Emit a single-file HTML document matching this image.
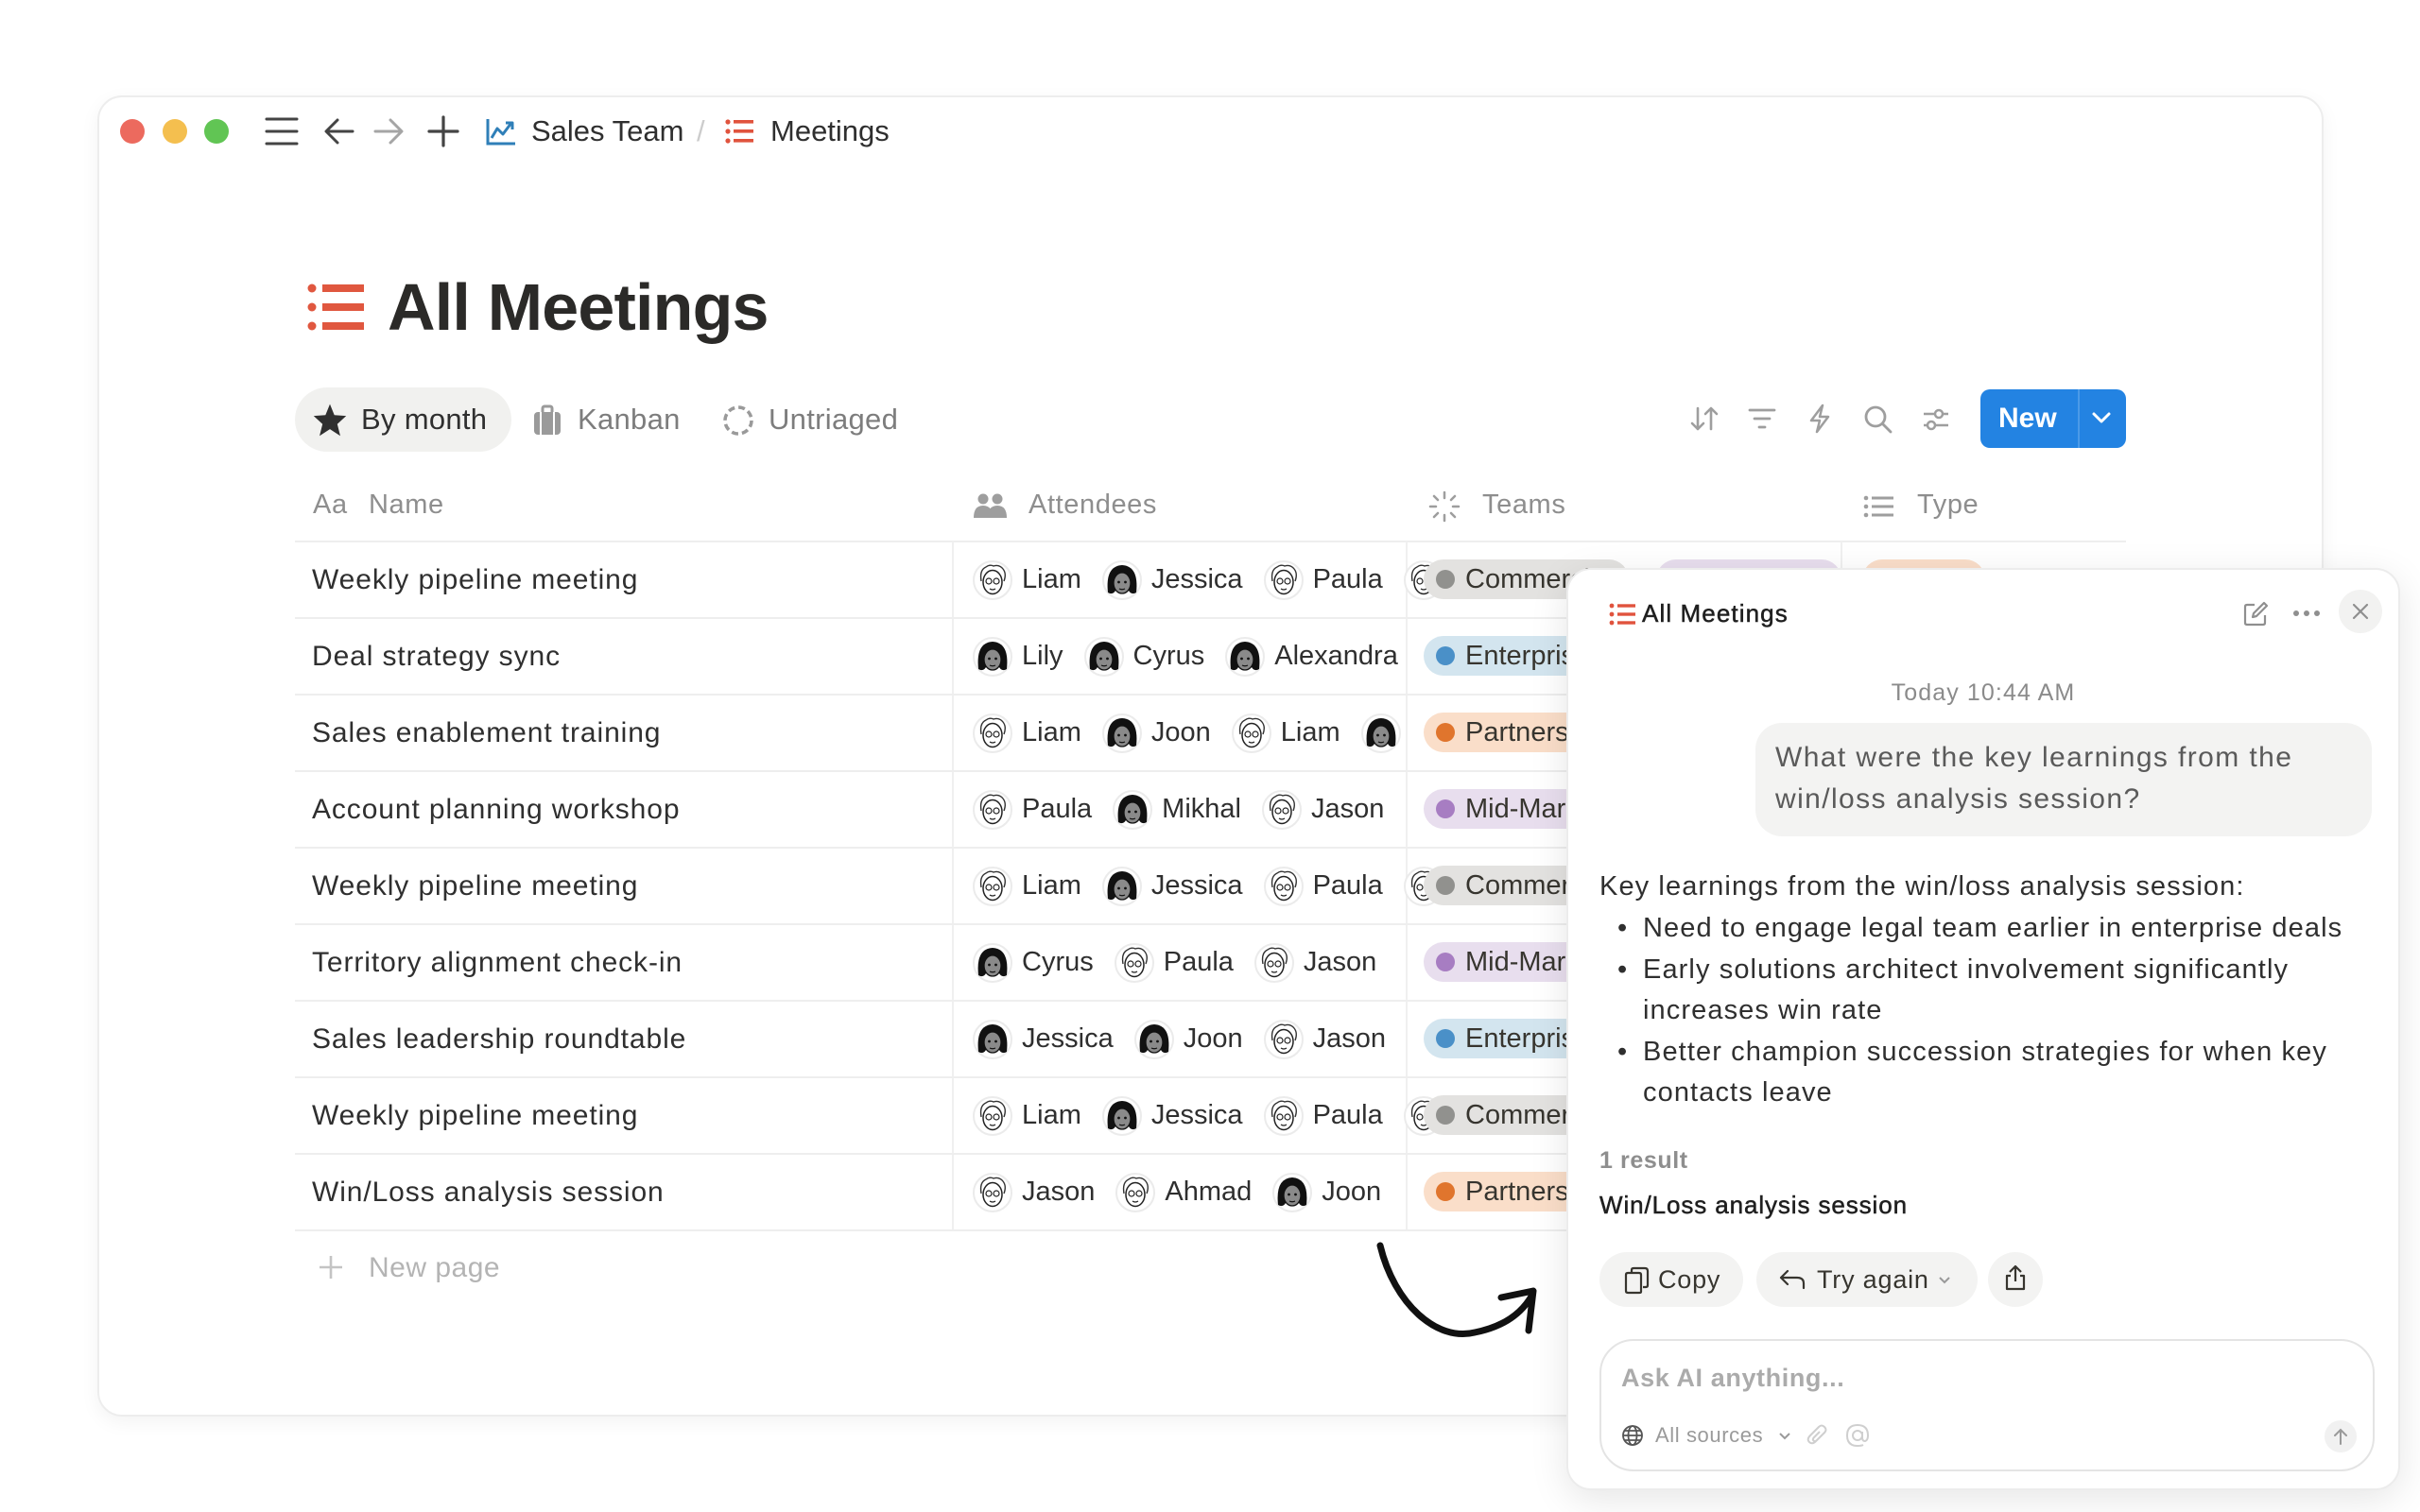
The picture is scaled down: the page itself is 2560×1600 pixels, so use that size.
<!DOCTYPE html>
<html><head><meta charset="utf-8">
<style>
*{box-sizing:border-box;margin:0;padding:0}
body{width:2560px;height:1600px;overflow:hidden;background:#fff;font-family:"Liberation Sans",sans-serif;color:#2f2f2f;position:relative}
.abs{position:absolute}
.win{position:absolute;left:103px;top:101px;width:2355px;height:1398px;border:2px solid #ededed;border-radius:26px;box-shadow:0 6px 20px rgba(0,0,0,.05);background:#fff}
.dot{position:absolute;top:126px;width:26px;height:26px;border-radius:50%}
.crumb{position:absolute;top:119px;font-size:31px;color:#2f2f2f;line-height:40px}
.tab{position:absolute;top:410px;height:68px;line-height:68px;font-size:31px;color:#7d7d7d;letter-spacing:0.3px}
.hdr{position:absolute;top:514px;font-size:29px;color:#8e8e8e;line-height:40px;letter-spacing:0.6px}
.hline{position:absolute;left:312px;width:1937px;height:2px;background:#eeeeee}
.vline{position:absolute;width:2px;background:#f0f0f0}
.row{position:absolute;left:312px;width:1937px;height:81px}
.nm{position:absolute;left:18px;top:0;line-height:81px;font-size:30px;color:#2f2f2f;letter-spacing:0.9px}
.att{position:absolute;left:717px;top:0;height:81px;width:768px;overflow:hidden;display:flex;align-items:center;white-space:nowrap}
.att span{font-size:29px;margin:0 22px 0 10px;color:#2f2f2f}
.av{width:42px;height:42px;flex:none}
.pill{position:absolute;top:19px;height:42px;border-radius:21px;font-size:29px;line-height:42px;padding-left:44px;white-space:nowrap;overflow:hidden;color:#37352f}
.pill i{position:absolute;left:13px;top:11px;width:20px;height:20px;border-radius:50%}
.panel{position:absolute;left:1657px;top:601px;width:882px;height:976px;background:#fff;border:2px solid #ececec;border-radius:26px;box-shadow:0 10px 40px rgba(0,0,0,.10);z-index:5}
.pt{position:absolute;font-size:29px;color:#2f2f2f;line-height:44px;white-space:nowrap;letter-spacing:1.1px}
.btn{position:absolute;top:722px;height:58px;border-radius:29px;background:#f3f3f2;font-size:27px;line-height:58px;color:#37352f;letter-spacing:0.8px}
</style></head><body>
<div class="win"></div>
<div class="dot" style="left:127px;background:#ec6a5e"></div>
<div class="dot" style="left:172px;background:#f4bf4f"></div>
<div class="dot" style="left:216px;background:#61c554"></div>
<svg class="abs" style="left:280px;top:122px" width="36" height="34" viewBox="0 0 36 34"><g stroke="#444" stroke-width="3" stroke-linecap="round"><path d="M2 4H34M2 17H34M2 30H34"/></g></svg>
<svg class="abs" style="left:342px;top:124px" width="34" height="30" viewBox="0 0 34 30"><path d="M31 15H4M15 3L3 15L15 27" fill="none" stroke="#444" stroke-width="3" stroke-linecap="round" stroke-linejoin="round"/></svg>
<svg class="abs" style="left:394px;top:124px" width="34" height="30" viewBox="0 0 34 30"><path d="M3 15H30M19 3L31 15L19 27" fill="none" stroke="#a5a5a5" stroke-width="3" stroke-linecap="round" stroke-linejoin="round"/></svg>
<svg class="abs" style="left:452px;top:122px" width="34" height="34" viewBox="0 0 34 34"><path d="M17 2V32M2 17H32" stroke="#444" stroke-width="3.2" stroke-linecap="round"/></svg>
<svg class="abs" style="left:514px;top:124px" width="32" height="30" viewBox="0 0 32 30"><path d="M2 2V28H31" fill="none" stroke="#2f7fb8" stroke-width="3"/><path d="M6 22L12 12L18 18L27 6M21 6H28V13" fill="none" stroke="#2f7fb8" stroke-width="3" stroke-linejoin="round"/></svg>
<div class="crumb" style="left:562px">Sales Team</div>
<div class="crumb" style="left:737px;color:#ccc">/</div>
<svg class="abs" style="left:767px;top:126px" width="30" height="26" viewBox="0 0 30 26"><g fill="#e0533d"><circle cx="3" cy="3" r="2.6"/><circle cx="3" cy="13" r="2.6"/><circle cx="3" cy="23" r="2.6"/><rect x="9" y="1" width="21" height="3.6"/><rect x="9" y="11" width="21" height="3.6"/><rect x="9" y="21" width="21" height="3.6"/></g></svg>
<div class="crumb" style="left:815px">Meetings</div>

<svg class="abs" style="left:325px;top:299px" width="60" height="52" viewBox="0 0 60 52"><g fill="#e0573f"><circle cx="5" cy="6" r="4.5"/><circle cx="5" cy="26" r="4.5"/><circle cx="5" cy="46" r="4.5"/><rect x="16" y="2" width="44" height="8"/><rect x="16" y="22" width="44" height="8"/><rect x="16" y="42" width="44" height="8"/></g></svg>
<div class="abs" style="left:410px;top:280px;font-size:70px;font-weight:bold;line-height:90px;color:#2b2a28;letter-spacing:-0.8px">All Meetings</div>

<div class="abs" style="left:312px;top:410px;width:229px;height:68px;border-radius:34px;background:#f1f1ef"></div>
<svg class="abs" style="left:330px;top:426px" width="38" height="36" viewBox="0 0 24 23"><path d="M12 1L15 8.5L23 9L17 14.5L19 22.5L12 18L5 22.5L7 14.5L1 9L9 8.5Z" fill="#2f2f2f"/></svg>
<div class="tab" style="left:382px;color:#2f2f2f">By month</div>
<svg class="abs" style="left:563px;top:428px" width="32" height="34" viewBox="0 0 32 34"><rect x="2" y="8" width="28" height="24" rx="4" fill="#9a9a9a"/><rect x="11" y="2" width="10" height="10" rx="2" fill="none" stroke="#9a9a9a" stroke-width="3"/><path d="M9 8V32M23 8V32" stroke="#fff" stroke-width="2"/></svg>
<div class="tab" style="left:611px">Kanban</div>
<svg class="abs" style="left:764px;top:428px" width="34" height="34" viewBox="0 0 34 34"><circle cx="17" cy="17" r="14" fill="none" stroke="#9a9a9a" stroke-width="3.5" stroke-dasharray="7 4"/></svg>
<div class="tab" style="left:813px">Untriaged</div>

<svg class="abs" style="left:1788px;top:428px" width="30" height="30" viewBox="0 0 30 30"><path d="M8 4V26M2 20L8 26L14 20M22 26V4M16 10L22 4L28 10" fill="none" stroke="#9e9e9e" stroke-width="2.6" stroke-linecap="round" stroke-linejoin="round"/></svg>
<svg class="abs" style="left:1849px;top:430px" width="30" height="26" viewBox="0 0 30 26"><path d="M2 4H28M7 13H23M12 22H18" stroke="#9e9e9e" stroke-width="2.8" stroke-linecap="round"/></svg>
<svg class="abs" style="left:1913px;top:427px" width="24" height="32" viewBox="0 0 24 32"><path d="M15 2L3 18H12L9 30L21 14H12Z" fill="none" stroke="#9e9e9e" stroke-width="2.5" stroke-linejoin="round"/></svg>
<svg class="abs" style="left:1971px;top:428px" width="32" height="32" viewBox="0 0 32 32"><circle cx="13" cy="13" r="10" fill="none" stroke="#9e9e9e" stroke-width="2.8"/><path d="M21 21L29 29" stroke="#9e9e9e" stroke-width="2.8" stroke-linecap="round"/></svg>
<svg class="abs" style="left:2033px;top:430px" width="30" height="28" viewBox="0 0 30 28"><g stroke="#9e9e9e" stroke-width="2.5" fill="#fff"><path d="M2 8H28M2 20H28"/><circle cx="18" cy="8" r="4"/><circle cx="10" cy="20" r="4"/></g></svg>
<div class="abs" style="left:2095px;top:412px;width:154px;height:62px;border-radius:10px;background:#2383e2"></div>
<div class="abs" style="left:2114px;top:412px;line-height:62px;font-size:30px;font-weight:bold;color:#fff">New</div>
<div class="abs" style="left:2198px;top:412px;width:2px;height:62px;background:#4a9ae8"></div>
<svg class="abs" style="left:2212px;top:434px" width="22" height="16" viewBox="0 0 22 16"><path d="M3 4L11 12L19 4" fill="none" stroke="#fff" stroke-width="3" stroke-linecap="round" stroke-linejoin="round"/></svg>

<div class="hdr" style="left:331px">Aa</div>
<div class="hdr" style="left:390px">Name</div>
<svg class="abs" style="left:1030px;top:522px" width="36" height="26" viewBox="0 0 36 26"><g fill="#9e9e9e"><circle cx="10" cy="6" r="5.5"/><circle cx="25" cy="6" r="5.5"/><path d="M0 26Q0 13 10 13Q20 13 20 26Z"/><path d="M15 26Q15 13 25 13Q35 13 35 26Z"/></g></svg>
<div class="hdr" style="left:1088px">Attendees</div>
<svg class="abs" style="left:1511px;top:519px" width="34" height="34" viewBox="0 0 34 34"><g stroke="#9e9e9e" stroke-width="2.5" stroke-linecap="round"><path d="M17 2V8M17 26V32M2 17H8M26 17H32M6 6L10 10M24 24L28 28M28 6L24 10M10 24L6 28"/></g></svg>
<div class="hdr" style="left:1568px">Teams</div>
<svg class="abs" style="left:1971px;top:524px" width="32" height="24" viewBox="0 0 32 24"><g fill="#9e9e9e"><circle cx="3" cy="3" r="2.3"/><circle cx="3" cy="12" r="2.3"/><circle cx="3" cy="21" r="2.3"/><rect x="9" y="1.5" width="23" height="3"/><rect x="9" y="10.5" width="23" height="3"/><rect x="9" y="19.5" width="23" height="3"/></g></svg>
<div class="hdr" style="left:2028px">Type</div>

<div class="hline" style="top:572px"></div>
<div class="vline" style="left:1007px;top:573px;height:729px"></div>
<div class="vline" style="left:1487px;top:573px;height:729px"></div>
<div class="vline" style="left:1947px;top:573px;height:729px"></div>

<svg width="0" height="0" style="position:absolute">
<defs>
<symbol id="L" viewBox="0 0 42 42"><circle cx="21" cy="21" r="20" fill="#fff" stroke="#ebebeb" stroke-width="2"/><path d="M9 22Q7 10 14 7Q18 4 22 6Q28 4 32 9Q36 14 33 22" fill="none" stroke="#333" stroke-width="1.4"/><ellipse cx="21" cy="23" rx="10" ry="12.5" fill="#fff" stroke="#222" stroke-width="1.5"/><circle cx="17" cy="22" r="3" fill="none" stroke="#222" stroke-width="1.2"/><circle cx="25" cy="22" r="3" fill="none" stroke="#222" stroke-width="1.2"/><path d="M18 30Q21 32 24 30" fill="none" stroke="#222" stroke-width="1.3"/></symbol>
<symbol id="D" viewBox="0 0 42 42"><circle cx="21" cy="21" r="20" fill="#fff" stroke="#ebebeb" stroke-width="2"/><path d="M6 34Q3 6 21 5Q39 6 36 34Q31 37 28 32L14 32Q11 37 6 34Z" fill="#111"/><ellipse cx="21" cy="24" rx="9" ry="11" fill="#8a8a8a" stroke="#111" stroke-width="1.3"/><circle cx="17.5" cy="23" r="1.4" fill="#111"/><circle cx="24.5" cy="23" r="1.4" fill="#111"/><path d="M18 30Q21 31.5 24 30" fill="none" stroke="#111" stroke-width="1.2"/></symbol>
</defs></svg>

<div class="row" style="top:573px"><div class="nm">Weekly pipeline meeting</div><div class="att"><svg class="av"><use href="#L" width="42" height="42"/></svg><span>Liam</span><svg class="av"><use href="#D" width="42" height="42"/></svg><span>Jessica</span><svg class="av"><use href="#L" width="42" height="42"/></svg><span>Paula</span><svg class="av"><use href="#L" width="42" height="42"/></svg></div><div class="pill" style="left:1194px;width:217px;background:#e3e2e0"><i style="background:#91918e"></i>Commercial</div><div class="pill" style="left:1440px;width:196px;background:#e8deee"><i style="background:#a77dc2"></i>Mid-Market</div><div class="pill" style="left:1658px;width:130px;background:#fadec9"><i style="background:#e0752d"></i>Call</div></div>
<div class="hline" style="top:653px"></div>
<div class="row" style="top:654px"><div class="nm">Deal strategy sync</div><div class="att"><svg class="av"><use href="#D" width="42" height="42"/></svg><span>Lily</span><svg class="av"><use href="#D" width="42" height="42"/></svg><span>Cyrus</span><svg class="av"><use href="#D" width="42" height="42"/></svg><span>Alexandra</span></div><div class="pill" style="left:1194px;width:217px;background:#d3e5ef"><i style="background:#4a90c8"></i>Enterprise</div></div>
<div class="hline" style="top:734px"></div>
<div class="row" style="top:735px"><div class="nm">Sales enablement training</div><div class="att"><svg class="av"><use href="#L" width="42" height="42"/></svg><span>Liam</span><svg class="av"><use href="#D" width="42" height="42"/></svg><span>Joon</span><svg class="av"><use href="#L" width="42" height="42"/></svg><span>Liam</span><svg class="av"><use href="#D" width="42" height="42"/></svg></div><div class="pill" style="left:1194px;width:217px;background:#fadec9"><i style="background:#e0752d"></i>Partners</div></div>
<div class="hline" style="top:815px"></div>
<div class="row" style="top:816px"><div class="nm">Account planning workshop</div><div class="att"><svg class="av"><use href="#L" width="42" height="42"/></svg><span>Paula</span><svg class="av"><use href="#D" width="42" height="42"/></svg><span>Mikhal</span><svg class="av"><use href="#L" width="42" height="42"/></svg><span>Jason</span></div><div class="pill" style="left:1194px;width:217px;background:#e8deee"><i style="background:#a77dc2"></i>Mid-Market</div></div>
<div class="hline" style="top:896px"></div>
<div class="row" style="top:897px"><div class="nm">Weekly pipeline meeting</div><div class="att"><svg class="av"><use href="#L" width="42" height="42"/></svg><span>Liam</span><svg class="av"><use href="#D" width="42" height="42"/></svg><span>Jessica</span><svg class="av"><use href="#L" width="42" height="42"/></svg><span>Paula</span><svg class="av"><use href="#L" width="42" height="42"/></svg></div><div class="pill" style="left:1194px;width:217px;background:#e3e2e0"><i style="background:#91918e"></i>Commercial</div></div>
<div class="hline" style="top:977px"></div>
<div class="row" style="top:978px"><div class="nm">Territory alignment check-in</div><div class="att"><svg class="av"><use href="#D" width="42" height="42"/></svg><span>Cyrus</span><svg class="av"><use href="#L" width="42" height="42"/></svg><span>Paula</span><svg class="av"><use href="#L" width="42" height="42"/></svg><span>Jason</span></div><div class="pill" style="left:1194px;width:217px;background:#e8deee"><i style="background:#a77dc2"></i>Mid-Market</div></div>
<div class="hline" style="top:1058px"></div>
<div class="row" style="top:1059px"><div class="nm">Sales leadership roundtable</div><div class="att"><svg class="av"><use href="#D" width="42" height="42"/></svg><span>Jessica</span><svg class="av"><use href="#D" width="42" height="42"/></svg><span>Joon</span><svg class="av"><use href="#L" width="42" height="42"/></svg><span>Jason</span></div><div class="pill" style="left:1194px;width:217px;background:#d3e5ef"><i style="background:#4a90c8"></i>Enterprise</div></div>
<div class="hline" style="top:1139px"></div>
<div class="row" style="top:1140px"><div class="nm">Weekly pipeline meeting</div><div class="att"><svg class="av"><use href="#L" width="42" height="42"/></svg><span>Liam</span><svg class="av"><use href="#D" width="42" height="42"/></svg><span>Jessica</span><svg class="av"><use href="#L" width="42" height="42"/></svg><span>Paula</span><svg class="av"><use href="#L" width="42" height="42"/></svg></div><div class="pill" style="left:1194px;width:217px;background:#e3e2e0"><i style="background:#91918e"></i>Commercial</div></div>
<div class="hline" style="top:1220px"></div>
<div class="row" style="top:1221px"><div class="nm">Win/Loss analysis session</div><div class="att"><svg class="av"><use href="#L" width="42" height="42"/></svg><span>Jason</span><svg class="av"><use href="#L" width="42" height="42"/></svg><span>Ahmad</span><svg class="av"><use href="#D" width="42" height="42"/></svg><span>Joon</span></div><div class="pill" style="left:1194px;width:217px;background:#fadec9"><i style="background:#e0752d"></i>Partners</div></div>
<div class="hline" style="top:1301px"></div>

<svg class="abs" style="left:337px;top:1328px" width="26" height="26" viewBox="0 0 26 26"><path d="M13 1V25M1 13H25" stroke="#c4c4c4" stroke-width="2.6"/></svg>
<div class="abs" style="left:390px;top:1322px;font-size:30px;color:#b4b4b4;line-height:40px;letter-spacing:0.5px">New page</div>

<svg class="abs" style="left:0;top:0" width="2560" height="1600"><path d="M1460 1318C1475 1380 1520 1420 1560 1410C1590 1404 1610 1390 1621 1370" fill="none" stroke="#111" stroke-width="7" stroke-linecap="round"/><path d="M1588 1373L1622 1366L1617 1408" fill="none" stroke="#111" stroke-width="7" stroke-linecap="round" stroke-linejoin="round"/></svg>

<div class="panel">
<svg class="abs" style="left:43px;top:35px" width="28" height="24" viewBox="0 0 28 24"><g fill="#e0533d"><circle cx="3" cy="3" r="2.4"/><circle cx="3" cy="12" r="2.4"/><circle cx="3" cy="21" r="2.4"/><rect x="9" y="1.3" width="19" height="3.4"/><rect x="9" y="10.3" width="19" height="3.4"/><rect x="9" y="19.3" width="19" height="3.4"/></g></svg>
<div class="pt" style="left:78px;top:24px;font-size:26px;color:#1f1f1f;-webkit-text-stroke:0.5px #1f1f1f">All Meetings</div>
<svg class="abs" style="left:713px;top:33px" width="28" height="28" viewBox="0 0 28 28"><path d="M13 4H5Q3 4 3 6V23Q3 25 5 25H22Q24 25 24 23V15" fill="none" stroke="#8f8f8f" stroke-width="2.2"/><path d="M11 17L12 13L23 2L26 5L15 16Z" fill="none" stroke="#8f8f8f" stroke-width="2.2" stroke-linejoin="round"/></svg>
<svg class="abs" style="left:766px;top:42px" width="30" height="8" viewBox="0 0 30 8"><g fill="#8f8f8f"><circle cx="4" cy="4" r="3"/><circle cx="15" cy="4" r="3"/><circle cx="26" cy="4" r="3"/></g></svg>
<div class="abs" style="left:815px;top:21px;width:46px;height:46px;border-radius:50%;background:#f2f2f1"></div>
<svg class="abs" style="left:829px;top:35px" width="18" height="18" viewBox="0 0 18 18"><path d="M2 2L16 16M16 2L2 16" stroke="#8f8f8f" stroke-width="2.2" stroke-linecap="round"/></svg>
<div class="pt" style="left:0;width:878px;text-align:center;top:108px;font-size:25px;color:#8b8b8b">Today 10:44 AM</div>
<div class="abs" style="left:198px;top:162px;width:652px;height:120px;border-radius:28px;background:#f3f3f2"></div>
<div class="pt" style="left:219px;top:177px;font-size:30px;color:#5a5a5a;letter-spacing:1.4px">What were the key learnings from the</div>
<div class="pt" style="left:219px;top:221px;font-size:30px;color:#5a5a5a;letter-spacing:1.4px">win/loss analysis session?</div>
<div class="pt" style="left:33px;top:313px">Key learnings from the win/loss analysis session:</div>
<div class="pt" style="left:52px;top:357px">•</div><div class="pt" style="left:79px;top:357px">Need to engage legal team earlier in enterprise deals</div>
<div class="pt" style="left:52px;top:401px">•</div><div class="pt" style="left:79px;top:401px">Early solutions architect involvement significantly</div>
<div class="pt" style="left:79px;top:444px">increases win rate</div>
<div class="pt" style="left:52px;top:488px">•</div><div class="pt" style="left:79px;top:488px">Better champion succession strategies for when key</div>
<div class="pt" style="left:79px;top:531px">contacts leave</div>
<div class="pt" style="left:33px;top:603px;font-size:25px;font-weight:bold;color:#8e8e8e;letter-spacing:0.6px">1 result</div>
<div class="pt" style="left:33px;top:650px;font-size:26px;color:#1f1f1f;-webkit-text-stroke:0.5px #1f1f1f;letter-spacing:0.9px">Win/Loss analysis session</div>
<div class="btn" style="left:33px;width:152px"><svg class="abs" style="left:24px;top:15px" width="30" height="30" viewBox="0 0 30 30"><path d="M10 6V4Q10 2 12 2H24Q27 2 27 5V20Q27 22 25 22H22M4 9Q4 7 6 7H18Q20 7 20 9V27Q20 28 18 28H6Q4 28 4 26Z" fill="none" stroke="#37352f" stroke-width="2.2"/></svg><span style="position:absolute;left:62px">Copy</span></div>
<div class="btn" style="left:199px;width:234px"><svg class="abs" style="left:24px;top:18px" width="28" height="22" viewBox="0 0 28 22"><path d="M9 2L2 9L9 16M2 9H19Q26 9 26 15V20" fill="none" stroke="#37352f" stroke-width="2.2" stroke-linecap="round" stroke-linejoin="round"/></svg><span style="position:absolute;left:64px">Try again</span><svg class="abs" style="left:192px;top:25px" width="14" height="10" viewBox="0 0 14 10"><path d="M2 2L7 7L12 2" fill="none" stroke="#999" stroke-width="2"/></svg></div>
<div class="btn" style="left:444px;width:58px"><svg class="abs" style="left:17px;top:13px" width="24" height="28" viewBox="0 0 24 28"><path d="M12 18V3M6 8L12 2L18 8M7 12H3V26H21V12H17" fill="none" stroke="#37352f" stroke-width="2.2" stroke-linejoin="round"/></svg></div>
<div class="abs" style="left:33px;top:814px;width:820px;height:140px;border:2px solid #e4e4e4;border-radius:36px"></div>
<div class="pt" style="left:56px;top:833px;font-size:27px;color:#ababab;font-weight:bold;letter-spacing:0.6px">Ask AI anything...</div>
<svg class="abs" style="left:56px;top:904px" width="24" height="24" viewBox="0 0 24 24"><g fill="none" stroke="#555" stroke-width="1.8"><circle cx="12" cy="12" r="10"/><ellipse cx="12" cy="12" rx="4.5" ry="10"/><path d="M2 12H22M4 7H20M4 17H20"/></g></svg>
<div class="pt" style="left:92px;top:894px;font-size:22px;color:#9a9a9a;letter-spacing:0.6px">All sources</div>
<svg class="abs" style="left:222px;top:912px" width="14" height="10" viewBox="0 0 14 10"><path d="M2 2L7 7L12 2" fill="none" stroke="#9a9a9a" stroke-width="2"/></svg>
<svg class="abs" style="left:252px;top:904px" width="24" height="24" viewBox="0 0 24 24"><path d="M18 10L10 18Q6 22 3 19Q0 16 4 12L13 3Q16 0 19 3Q22 6 19 9L11 17Q9 19 7.5 17.5Q6 16 8 14L14 8" fill="none" stroke="#cfcfcf" stroke-width="2"/></svg>
<svg class="abs" style="left:293px;top:903px" width="26" height="26" viewBox="0 0 26 26"><circle cx="13" cy="13" r="5" fill="none" stroke="#cfcfcf" stroke-width="2"/><path d="M18 9V15Q18 19 21 19Q24 18 24 13Q24 2 13 2Q2 2 2 13Q2 24 13 24Q17 24 19 23" fill="none" stroke="#cfcfcf" stroke-width="2"/></svg>
<div class="abs" style="left:800px;top:900px;width:34px;height:34px;border-radius:50%;background:#f1f1f1"></div>
<svg class="abs" style="left:808px;top:907px" width="18" height="20" viewBox="0 0 18 20"><path d="M9 18V3M3 9L9 3L15 9" fill="none" stroke="#9a9a9a" stroke-width="2" stroke-linecap="round"/></svg>
</div>
</body></html>
